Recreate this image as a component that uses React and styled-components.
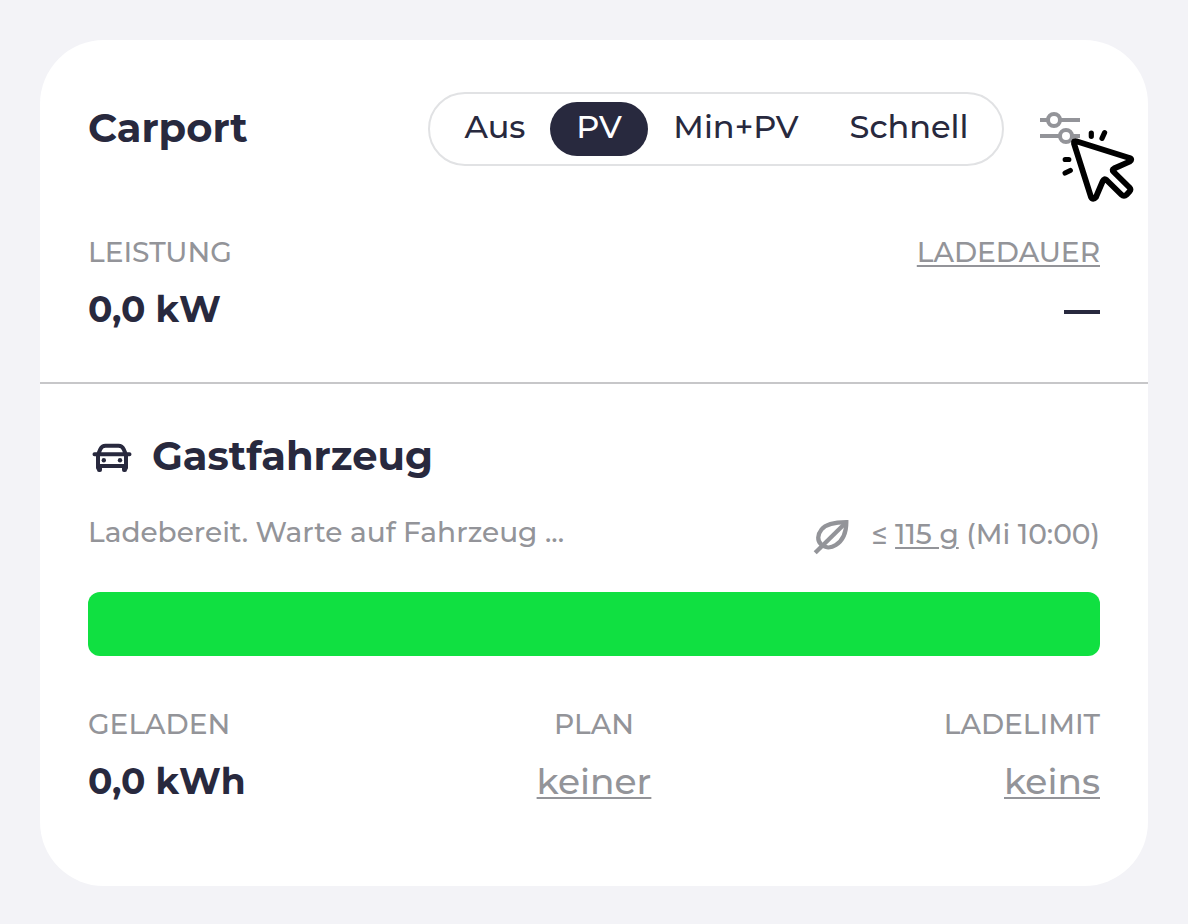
import React from "react";
import styled, { createGlobalStyle } from "styled-components";

const INK = "#28293e";
const GRAY = "#939499";

const GlobalStyle = createGlobalStyle`
  * { box-sizing: border-box; }
  body {
    margin: 0;
    background: #f3f3f7;
    color: ${INK};
    font-family: Montserrat, Inter, sans-serif;
    font-weight: 500;
  }
`;

const Page = styled.main`
  width: 1188px;
  height: 924px;
  padding: 40px 40px 38px;
`;

const Card = styled.section`
  position: relative;
  height: 846px;
  background: #fff;
  border-radius: 64px;
`;

const Section = styled.div`
  padding: ${(p) => p.$pad};
`;

const LoadpointSection = styled(Section)`
  height: 344px;
  border-bottom: 2px solid #c7c7c9;
`;

const Header = styled.header`
  display: flex;
  align-items: center;
  height: 74px;
`;

const Title = styled.h2`
  margin: 0;
  padding-bottom: ${(p) => p.$lift || 0};
  font-size: 40px;
  line-height: 48px;
  font-weight: 700;
  white-space: nowrap;
`;

const ModeGroup = styled.div`
  display: flex;
  align-items: center;
  width: 576px;
  height: 74px;
  margin-left: auto;
  padding: 0 8px 0 10px;
  border: 2px solid #e1e2e4;
  border-radius: 37px;
`;

const Mode = styled.button`
  display: flex;
  justify-content: center;
  width: ${(p) => p.$width};
  height: 54px;
  padding: 0 0 4px;
  border: 0;
  border-radius: 27px;
  background: ${(p) => (p.$active ? INK : "transparent")};
  color: ${(p) => (p.$active ? "#fff" : INK)};
  font: inherit;
  font-size: 32px;
  line-height: 50px;
  white-space: nowrap;
`;

const SettingsButton = styled.button`
  display: flex;
  width: 40px;
  height: 40px;
  margin-left: 36px;
  margin-right: 20px;
  padding: 0;
  border: 0;
  background: none;
`;

const Row = styled.div`
  display: grid;
  grid-template-columns: ${(p) => p.$columns};
  margin-top: ${(p) => p.$top};
`;

const Metric = styled.div`
  display: flex;
  flex-direction: column;
  align-items: ${(p) => p.$align || "flex-start"};
`;

const Label = styled.div`
  color: ${GRAY};
  font-size: 28px;
  line-height: 34px;
  margin-bottom: 18px;
  white-space: nowrap;
  text-decoration: ${(p) => (p.$link ? "underline" : "none")};
  text-decoration-thickness: 2px;
  text-underline-offset: 3px;
`;

const Value = styled.div`
  font-size: 36px;
  line-height: 44px;
  font-weight: ${(p) => (p.$link ? 500 : 700)};
  color: ${(p) => (p.$link ? GRAY : INK)};
  white-space: nowrap;
  text-decoration: ${(p) => (p.$link ? "underline" : "none")};
  text-decoration-thickness: 2px;
  text-underline-offset: 3px;
`;

const Dash = styled.div`
  width: 36px;
  height: 4px;
  margin-top: 23px;
  background: ${INK};
`;

const Vehicle = styled.div`
  display: flex;
  align-items: center;
  gap: 16px;
  height: 48px;
`;

const StatusRow = styled.div`
  display: flex;
  justify-content: space-between;
  height: 42px;
  margin-top: 35px;
`;

const Status = styled.div`
  color: ${GRAY};
  font-size: 28px;
  line-height: 34px;
  white-space: nowrap;
`;

const Emission = styled(Status)`
  display: flex;
  padding-top: 2px;

  svg { margin: -2px 20px 0 0; }
  u {
    text-decoration-thickness: 2px;
    text-underline-offset: 3px;
  }
`;

const ChargeBar = styled.div`
  height: 64px;
  margin-top: 35px;
  border-radius: 12px;
  background: #10e041;
`;

const Cursor = styled.svg`
  position: absolute;
  left: 980px;
  top: 50px;
`;

const SlidersIcon = () => (
  <svg width="40" height="40" viewBox="0 0 40 40" fill="none" stroke={GRAY} strokeWidth="4">
    <path d="M0 11h8M20 11h20M0 27h19M33 27h7" />
    <circle cx="14" cy="11" r="6" />
    <circle cx="26" cy="27" r="6" />
  </svg>
);

const CarIcon = () => (
  <svg width="48" height="48" viewBox="0 0 48 48" fill="none" stroke={INK} strokeWidth="4" strokeLinecap="round" strokeLinejoin="round">
    <path d="M6.5 22.2H41.5M10.5 21.5L12.3 17.3Q13.8 13.8 17.5 13.8H30.5Q34.2 13.8 35.7 17.3L37.5 21.5" />
    <path d="M10 23V36M38 23V36M10 34H38" />
    <path d="M11 36V38M12 36V38M36 36V38M37 36V38" />
    <circle cx="15.8" cy="28.2" r="2.2" fill={INK} stroke="none" />
    <circle cx="32" cy="28.2" r="2.2" fill={INK} stroke="none" />
  </svg>
);

const LeafIcon = () => (
  <svg width="38" height="40" viewBox="0 0 38 40" fill="none" stroke={GRAY} strokeWidth="4.3">
    <path d="M33.3 7.2C22 7.2 13 9 8.5 14.5C4.3 19.7 4.2 25.7 8 29.3C12 33.1 18 33.2 22.8 30C29.8 25.5 33.3 17 33.3 7.2Z" />
    <path d="M2.2 37.8L33 7.5" />
  </svg>
);

const CursorIcon = () => (
  <Cursor width="120" height="120" viewBox="-40 -36 120 120" fill="none" stroke="#000" strokeWidth="5.8" strokeLinecap="round" strokeLinejoin="round">
    <path fill="#fff" d="M16.3 15.2L69.5 32Q73 33.5 69.5 35.7L54 42.5Q51.5 43.8 53.5 45.8L69.5 61.5Q71.3 63.5 69.5 65.5L66.5 68.7Q64 71.2 61.5 68.7L46.5 54Q44.2 52 42.8 55L36 71Q33 74.5 31 71L14 17.5Q13.5 14.5 16.3 15.2Z" />
    <path strokeWidth="5.2" d="M31.3 7V10.3M44.6 6.7L42 12.3M5.2 33.5H8.8M5.1 47L10.3 44.5" />
  </Cursor>
);

const modes = [
  { name: "Aus", width: "110px" },
  { name: "PV", width: "98px", active: true },
  { name: "Min+PV", width: "176px" },
  { name: "Schnell", width: "170px" },
];

export default function App() {
  return (
    <Page>
      <GlobalStyle />
      <Card>
        <LoadpointSection $pad="52px 48px 0">
          <Header>
            <Title $lift="2px">Carport</Title>
            <ModeGroup>
              {modes.map((m) => (
                <Mode key={m.name} $width={m.width} $active={m.active}>
                  {m.name}
                </Mode>
              ))}
            </ModeGroup>
            <SettingsButton aria-label="Einstellungen"><SlidersIcon /></SettingsButton>
          </Header>
          <Row $columns="1fr 1fr" $top="69px">
            <Metric>
              <Label>LEISTUNG</Label>
              <Value>0,0 kW</Value>
            </Metric>
            <Metric $align="flex-end">
              <Label $link>LADEDAUER</Label>
              <Dash role="img" aria-label="keine Ladedauer" />
            </Metric>
          </Row>
        </LoadpointSection>
        <Section $pad="48px 48px 0">
          <Vehicle>
            <CarIcon />
            <Title as="h3">Gastfahrzeug</Title>
          </Vehicle>
          <StatusRow>
            <Status>Ladebereit. Warte auf Fahrzeug ...</Status>
            <Emission>
              <LeafIcon />
              <span>≤ <u>115 g</u> (Mi 10:00)</span>
            </Emission>
          </StatusRow>
          <ChargeBar />
          <Row $columns="1fr 1fr 1fr" $top="51px">
            <Metric>
              <Label>GELADEN</Label>
              <Value>0,0 kWh</Value>
            </Metric>
            <Metric $align="center">
              <Label>PLAN</Label>
              <Value $link>keiner</Value>
            </Metric>
            <Metric $align="flex-end">
              <Label>LADELIMIT</Label>
              <Value $link>keins</Value>
            </Metric>
          </Row>
        </Section>
        <CursorIcon />
      </Card>
    </Page>
  );
}
